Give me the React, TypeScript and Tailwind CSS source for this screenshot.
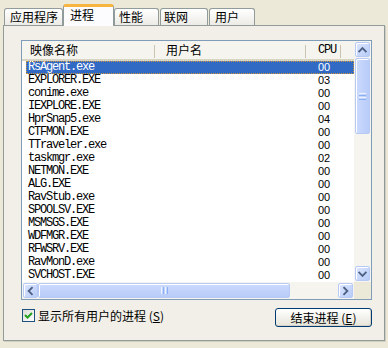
import React from "react";

const rows: [string, string][] = [
  ["RsAgent.exe", "00"],
  ["EXPLORER.EXE", "03"],
  ["conime.exe", "00"],
  ["IEXPLORE.EXE", "00"],
  ["HprSnap5.exe", "04"],
  ["CTFMON.EXE", "00"],
  ["TTraveler.exe", "00"],
  ["taskmgr.exe", "02"],
  ["NETMON.EXE", "00"],
  ["ALG.EXE", "00"],
  ["RavStub.exe", "00"],
  ["SPOOLSV.EXE", "00"],
  ["MSMSGS.EXE", "00"],
  ["WDFMGR.EXE", "00"],
  ["RFWSRV.EXE", "00"],
  ["RavMonD.exe", "00"],
  ["SVCHOST.EXE", "00"],
];

function Arrow({ dir }: { dir: "up" | "down" | "left" | "right" }) {
  const paths: Record<string, string> = {
    up: "M3.5 8.5 L7 5 L10.5 8.5",
    down: "M3.5 5.5 L7 9 L10.5 5.5",
    left: "M8.5 3.5 L5 7 L8.5 10.5",
    right: "M5.5 3.5 L9 7 L5.5 10.5",
  };
  return (
    <svg width="14" height="14" viewBox="0 0 14 14">
      <path d={paths[dir]} fill="none" stroke="#4D6185" strokeWidth="2" strokeLinecap="square" />
    </svg>
  );
}

function SBtn({ dir, cls }: { dir: "up" | "down" | "left" | "right"; cls: string }) {
  return (
    <div
      className={`${cls} flex items-center justify-center rounded-[2px] border border-[#B7CAF5] bg-gradient-to-br from-[#DCE6FE] to-[#B8CCF8] shadow-[inset_1px_1px_0_#FFFFFF]`}
    >
      <Arrow dir={dir} />
    </div>
  );
}

function Tab({ children, w, pl, ml }: { children: React.ReactNode; w: string; pl: string; ml: string }) {
  return (
    <div
      className={`${w} ${pl} ${ml} h-[17px] border border-b-0 border-[#919B9C] rounded-t-[3px] bg-gradient-to-b from-[#FFFFFF] to-[#ECEBE6] leading-[15px] whitespace-nowrap`}
    >
      {children}
    </div>
  );
}

export default function App() {
  return (
    <div className="w-[388px] h-[348px] bg-[#ECE9D8] flex flex-col overflow-hidden font-['Noto_Sans_CJK_SC',sans-serif] text-[12px] text-black">
      {/* Tabs */}
      <div className="h-[25px] flex items-end pl-[4px] relative z-10">
        <Tab w="w-[59px]" pl="pl-[5px]" ml="ml-0">应用程序</Tab>
        <div className="w-[51px] h-[22px] -mb-[1px] border-x border-[#919B9C] border-t-[3px] border-t-[#F5B53F] rounded-t-[3px] bg-[#FCFCFE] pl-[6px] leading-[15px] whitespace-nowrap">
          进程
        </div>
        <Tab w="w-[45px]" pl="pl-[4px]" ml="ml-0">性能</Tab>
        <Tab w="w-[48px]" pl="pl-[3px]" ml="ml-[1px]">联网</Tab>
        <Tab w="w-[46px]" pl="pl-[5px]" ml="ml-[1px]">用户</Tab>
      </div>

      {/* Panel */}
      <div className="ml-[3px] w-[382px] h-[316px] border border-[#919B9C] bg-[#F1EFE7] shadow-[1px_1px_0_#D0CEBF] flex flex-col">
        {/* List */}
        <div className="mt-[14px] ml-[17px] w-[351px] h-[260px] border border-[#7F9DB9] bg-white flex flex-col">
          <div className="flex h-[241px]">
            <div className="w-[332px] flex flex-col">
              {/* header */}
              <div className="h-[20px] flex bg-[#F5F4EE] border-b-[2px] border-[#D8D4C4] leading-[16px] pt-[1px] relative">
                <div className="w-[133px] pl-[8px] relative">
                  映像名称
                  <span className="absolute right-0 top-[3px] h-[13px] w-[1px] bg-[#C7C5B2]" />
                </div>
                <div className="w-[151px] pl-[11px] relative">
                  用户名
                  <span className="absolute right-0 top-[3px] h-[13px] w-[1px] bg-[#C7C5B2]" />
                </div>
                <div className="w-[35px] pl-[12px] relative font-['Liberation_Mono',monospace] tracking-[-1.2px]">
                  CPU
                  <span className="absolute right-0 top-[3px] h-[13px] w-[1px] bg-[#C7C5B2]" />
                </div>
              </div>
              {/* rows */}
              <div className="flex flex-col pl-[4px]">
                {rows.map(([name, cpu], i) => (
                  <div
                    key={name}
                    className={`h-[13px] flex leading-[13px] ${
                      i === 0 ? "bg-[#316AC5] text-white outline outline-1 outline-dotted outline-offset-[-1px] outline-[#CE953A]" : ""
                    }`}
                  >
                    <div className="w-[292px] pl-[2px] font-['Liberation_Mono',monospace] text-[12px] tracking-[-1.2px]">
                      {name}
                    </div>
                    <div className="font-['Liberation_Sans',sans-serif] text-[11px]">{cpu}</div>
                  </div>
                ))}
              </div>
            </div>
            {/* vertical scrollbar */}
            <div className="w-[17px] bg-[#F5F4EF] flex flex-col items-center pt-[1px] pb-[1px]">
              <SBtn dir="up" cls="w-[15px] h-[15px]" />
              <div className="w-[15px] h-[76px] mt-[1px] rounded-[2px] border border-[#B7CAF5] bg-gradient-to-r from-[#CCDAFD] to-[#B8CCF8] shadow-[inset_1px_1px_0_#FFFFFF] flex flex-col items-center justify-center gap-[1px]">
                <span className="w-[7px] h-[1px] bg-[#EEF4FE]" />
                <span className="w-[7px] h-[1px] bg-[#8CB0F8]" />
                <span className="w-[7px] h-[1px] bg-[#EEF4FE]" />
                <span className="w-[7px] h-[1px] bg-[#8CB0F8]" />
              </div>
              <div className="flex-1" />
              <SBtn dir="down" cls="w-[15px] h-[15px]" />
            </div>
          </div>
          {/* horizontal scrollbar */}
          <div className="flex h-[17px]">
            <div className="w-[332px] bg-[#F5F4EF] flex items-center pl-[1px] pr-[1px]">
              <SBtn dir="left" cls="w-[15px] h-[15px]" />
              <div className="w-[252px] h-[15px] rounded-[2px] border border-[#B7CAF5] bg-gradient-to-b from-[#CCDAFD] to-[#B8CCF8] shadow-[inset_1px_1px_0_#FFFFFF] flex items-center justify-center gap-[1px]">
                <span className="h-[7px] w-[1px] bg-[#EEF4FE]" />
                <span className="h-[7px] w-[1px] bg-[#8CB0F8]" />
                <span className="h-[7px] w-[1px] bg-[#EEF4FE]" />
                <span className="h-[7px] w-[1px] bg-[#8CB0F8]" />
              </div>
              <div className="flex-1" />
              <SBtn dir="right" cls="w-[15px] h-[15px]" />
            </div>
            <div className="w-[17px] bg-[#ECE9D8]" />
          </div>
        </div>

        {/* bottom row */}
        <div className="mt-[8px] ml-[17px] w-[351px] flex items-start justify-between">
          <div className="flex items-center mt-[1px] ml-[1px]">
            <div className="w-[13px] h-[13px] border border-[#1C5180] bg-gradient-to-br from-[#DCDBD5] to-[#FFFFFF] flex items-center justify-center">
              <svg width="11" height="11" viewBox="0 0 11 11">
                <path d="M2 5 L4.5 7.5 L9 3" fill="none" stroke="#21A121" strokeWidth="2" />
              </svg>
            </div>
            <span className="ml-[3px] leading-[13px] whitespace-nowrap">
              显示所有用户的进程 (<span className="underline">S</span>)
            </span>
          </div>
          <div className="w-[97px] h-[19px] rounded-[3px] border border-[#003C74] bg-gradient-to-b from-[#FFFFFF] to-[#E6E4DA] shadow-[inset_-1px_-1px_0_#D6D0C5] flex items-center justify-center leading-[15px] whitespace-nowrap">
            结束进程 (<span className="underline">E</span>)
          </div>
        </div>
      </div>
    </div>
  );
}
